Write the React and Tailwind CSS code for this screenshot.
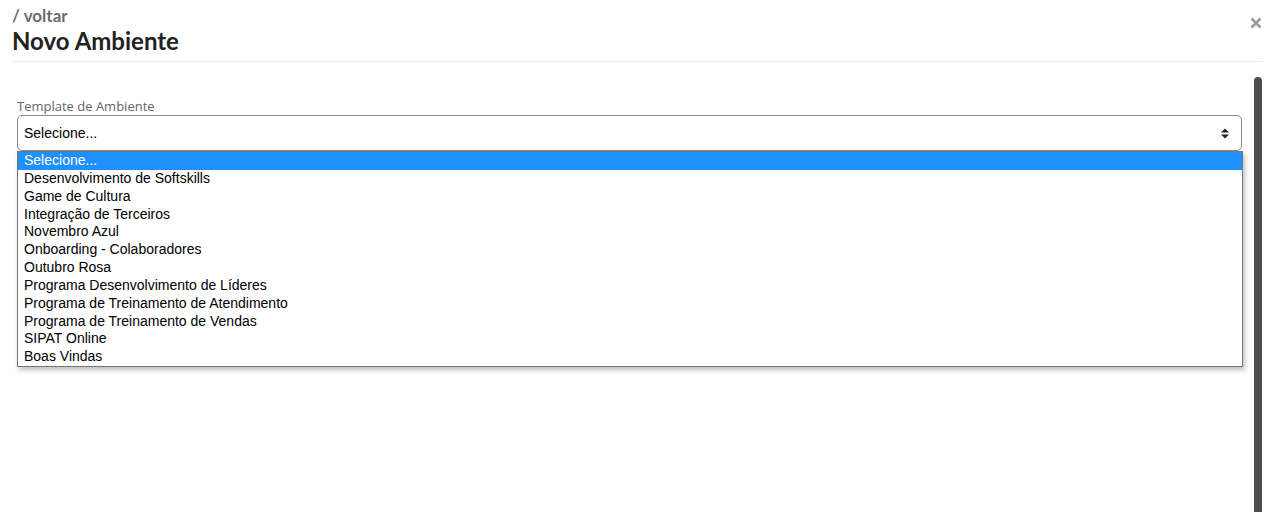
const options = [
  "Selecione...",
  "Desenvolvimento de Softskills",
  "Game de Cultura",
  "Integração de Terceiros",
  "Novembro Azul",
  "Onboarding - Colaboradores",
  "Outubro Rosa",
  "Programa Desenvolvimento de Líderes",
  "Programa de Treinamento de Atendimento",
  "Programa de Treinamento de Vendas",
  "SIPAT Online",
  "Boas Vindas",
];

export default function App() {
  return (
    <div className="w-[1271px] h-[512px] bg-white overflow-hidden flex flex-col font-['Lato',sans-serif]">
      {/* header */}
      <div className="mx-3 mr-2 h-[62px] border-b border-[#ececec] flex justify-between items-start">
        <div className="pt-[6px]">
          <div className="text-[17px] leading-[20px] font-bold text-[#6b6b6b]">/ voltar</div>
          <div className="text-[24px] leading-[29px] font-bold text-[#222]">Novo Ambiente</div>
        </div>
        <button className="mt-[17px] mr-[1px] text-[#9a9a9a]">
          <svg width="12" height="12" viewBox="0 0 12 12">
            <path d="M1.5 1.5 L10.5 10.5 M10.5 1.5 L1.5 10.5" stroke="currentColor" strokeWidth="2.6" strokeLinecap="butt" />
          </svg>
        </button>
      </div>

      {/* body */}
      <div className="flex flex-1 min-h-0">
        <div className="flex-1 pl-[17px] pr-[12px] pt-[35px] font-['Liberation_Sans',Arial,sans-serif]">
          <div className="text-[13px] leading-[18px] text-[#666] font-['Open_Sans',sans-serif]">Template de Ambiente</div>
          <div className="relative">
            <div className="h-[36px] border border-[#8a8a8a] rounded-[5px] flex items-center justify-between pl-[6px] pr-[12px] text-[14px] text-black">
              <span>Selecione...</span>
              <svg width="8" height="11" viewBox="0 0 8 11">
                <path d="M0 4.5 L4 0.5 L8 4.5 Z M0 6.5 L4 10.5 L8 6.5 Z" fill="#222" />
              </svg>
            </div>
            <div className="absolute left-0 right-[-1px] top-[36px] bg-white border border-[#767676] shadow-[2px_3px_5px_rgba(0,0,0,0.25)] text-[14px] leading-[17.85px] text-black">
              {options.map((o, i) => (
                <div key={o} className={`pl-[6px] ${i === 0 ? "bg-[#1e90ff] text-white" : ""}`}>
                  {o}
                </div>
              ))}
            </div>
          </div>
        </div>
        <div className="w-[17px] pt-[15px] flex justify-start">
          <div className="w-[8px] h-full bg-[#4d4d4d] rounded-t-[4px]" />
        </div>
      </div>
    </div>
  );
}
